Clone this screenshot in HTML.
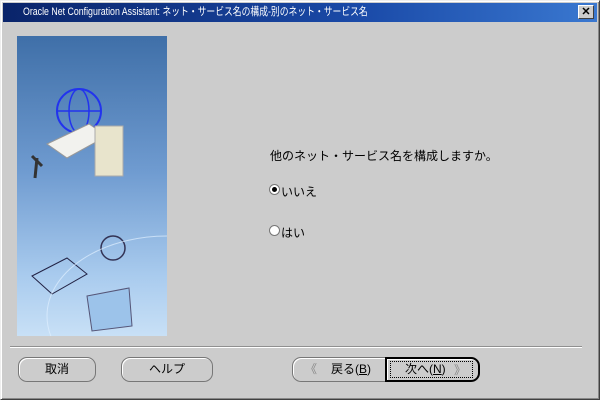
<!DOCTYPE html>
<html><head><meta charset="utf-8"><style>
*{margin:0;padding:0;box-sizing:border-box}
body{width:600px;height:400px;background:#cccccc;font-family:"Liberation Sans","Noto Sans CJK JP",sans-serif;font-size:12px;position:relative;overflow:hidden}
.win{position:absolute;left:0;top:0;width:600px;height:400px;border:1px solid;border-color:#eee #404040 #404040 #eee;box-shadow:inset 1px 1px 0 #fff,inset -1px -1px 0 #888}
.title{position:absolute;left:3px;top:3px;width:594px;height:19px;background:linear-gradient(90deg,#0a246a,#1a4aa8 60%,#3a78d0);color:#fff;line-height:19px;overflow:hidden}
.title span{position:absolute;left:20px;top:0;font-size:11px;transform:scaleX(.8);transform-origin:0 50%;white-space:nowrap}
.x{position:absolute;right:6px;top:5px;width:16px;height:14px;background:#ccc;border:1px solid;border-color:#fff #404040 #404040 #fff;font-size:11px;line-height:12px;text-align:center;color:#000;font-weight:bold}
.img{position:absolute;left:17px;top:36px;width:150px;height:300px;background:linear-gradient(180deg,#3f6fa8 0%,#6f9bd0 45%,#a9cbee 80%,#c8e0f6 100%);overflow:hidden}
.sep{position:absolute;left:10px;top:346px;width:572px;height:2px;border-top:1px solid #909090;border-bottom:1px solid #fff}
.btn{position:absolute;top:357px;height:25px;border:1px solid #777;border-radius:9px;background:#cccccc;box-shadow:inset 1px 1px 0 #fff;text-align:center;line-height:23px;font-size:12px}
.t{position:absolute;font-size:12px}
.r{position:absolute;width:11px;height:11px;border-radius:50%;background:#fff;border:1px solid #777}
</style></head><body>
<div class="win"></div>
<div class="title"><span>Oracle Net Configuration Assistant: ネット・サービス名の構成-別のネット・サービス名</span></div>
<div class="x">✕</div>
<div class="img">
<svg width="150" height="300">
<circle cx="62" cy="75" r="22" fill="none" stroke="#2233ee" stroke-width="2"/>
<ellipse cx="62" cy="75" rx="10" ry="22" fill="none" stroke="#2233ee" stroke-width="1.5"/>
<line x1="40" y1="75" x2="84" y2="75" stroke="#2233ee" stroke-width="1.5"/>
<polygon points="30,108 72,88 90,100 50,122" fill="#f2f2ee" stroke="#999"/>
<rect x="78" y="90" width="28" height="50" fill="#e8e4cc" stroke="#aaa"/>
<path d="M15 120 l10 10 m-5 -8 l-2 20" stroke="#333" stroke-width="3"/>
<circle cx="96" cy="212" r="12" fill="none" stroke="#335" stroke-width="1.5"/>
<polygon points="15,240 50,222 70,238 35,258" fill="none" stroke="#224" />
<polygon points="70,260 112,252 115,290 75,295" fill="#9cc3ea" stroke="#557"/>
<ellipse cx="150" cy="280" rx="120" ry="80" fill="none" stroke="#e0f0ff" stroke-width="1" opacity=".7"/>
</svg>
</div>
<div class="t" style="left:270px;top:147px">他のネット・サービス名を構成しますか。</div>
<div class="r" style="left:269px;top:184px"><div style="position:absolute;left:2px;top:2px;width:5px;height:5px;border-radius:50%;background:#000"></div></div>
<div class="t" style="left:281px;top:183px">いいえ</div>
<div class="r" style="left:269px;top:225px"></div>
<div class="t" style="left:281px;top:224px">はい</div>
<div class="sep"></div>
<div class="btn" style="left:18px;width:78px">取消</div>
<div class="btn" style="left:121px;width:92px">ヘルプ</div>
<div class="btn" style="left:292px;width:94px;border-radius:9px 0 0 9px"><span style="color:#888;position:absolute;left:12px">《</span>　　戻る(<u>B</u>)</div>
<div class="btn" style="left:385px;width:95px;border:2px solid #000;border-radius:0 9px 9px 0"><span style="border:1px dotted #000;position:absolute;left:3px;top:2px;width:83px;height:17px;line-height:15px;text-align:left;padding-left:14px">次へ(<u>N</u>)</span><span style="color:#888;position:absolute;right:12px">》</span></div>
</body></html>
